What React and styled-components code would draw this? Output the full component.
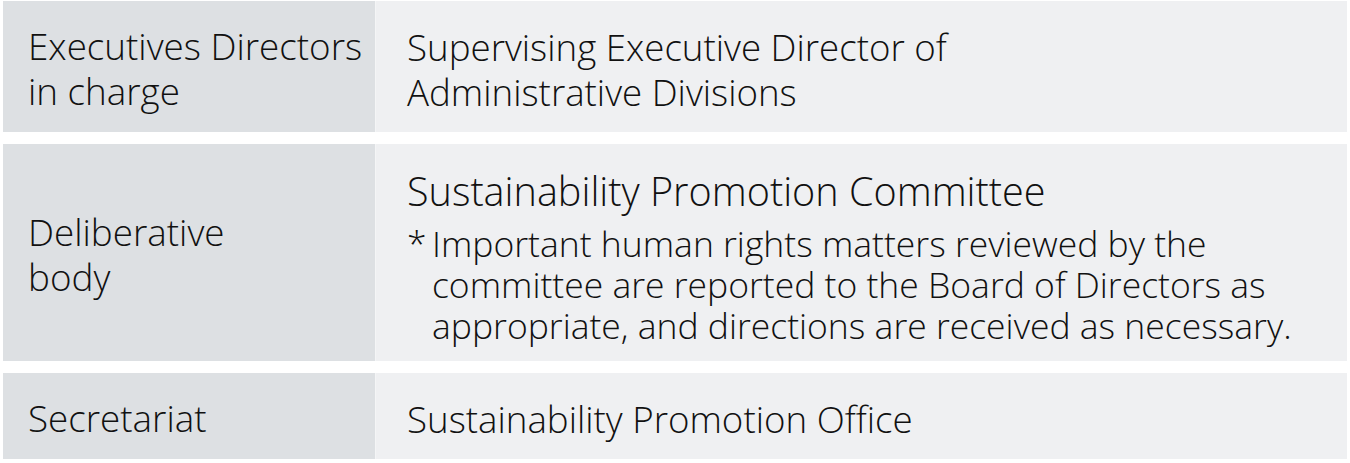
import React from "react";
import styled, { createGlobalStyle } from "styled-components";

const Global = createGlobalStyle`
  html, body { margin: 0; padding: 0; background: #ffffff; }
  body { font-family: "Open Sans", "Noto Sans", sans-serif; font-weight: 300; color: #111111; }
`;

const Table = styled.div`
  display: flex;
  flex-direction: column;
  gap: 12px;
  width: 1344px;
  margin: 1px 0 0 3px;
`;

const Row = styled.div`
  display: grid;
  grid-template-columns: 372px 1fr;
  height: ${(p) => p.$h}px;
`;

const Head = styled.div`
  background: #dde0e3;
  display: flex;
  align-items: center;
  padding: 5px 0 0 25px;
  font-size: 36.8px;
  line-height: 45px;
`;

const Cell = styled.div`
  background: #eff0f2;
  border-left: 1px solid #f4f5f6;
  display: flex;
  flex-direction: column;
  justify-content: center;
  padding: 7px 0 0 31px;
  font-size: 36.7px;
  line-height: 45px;
`;

const Title = styled.div`
  font-size: 39.6px;
  line-height: 48px;
  margin-bottom: 8px;
`;

const Note = styled.div`
  display: flex;
  font-size: 35.5px;
  line-height: 41px;
`;

const Mark = styled.span`
  width: 25px;
  flex: none;
`;

export default function App() {
  return (
    <>
      <Global />
      <Table>
        <Row $h={131}>
          <Head>
            <div>Executives Directors<br />in charge</div>
          </Head>
          <Cell>
            <div>Supervising Executive Director of<br />Administrative Divisions</div>
          </Cell>
        </Row>
        <Row $h={217}>
          <Head>
            <div>Deliberative<br />body</div>
          </Head>
          <Cell>
            <Title>Sustainability Promotion Committee</Title>
            <Note>
              <Mark>*</Mark>
              <div>
                Important human rights matters reviewed by the<br />
                committee are reported to the Board of Directors as<br />
                appropriate, and directions are received as necessary.
              </div>
            </Note>
          </Cell>
        </Row>
        <Row $h={86}>
          <Head>
            <div>Secretariat</div>
          </Head>
          <Cell>
            <div>Sustainability Promotion Office</div>
          </Cell>
        </Row>
      </Table>
    </>
  );
}
